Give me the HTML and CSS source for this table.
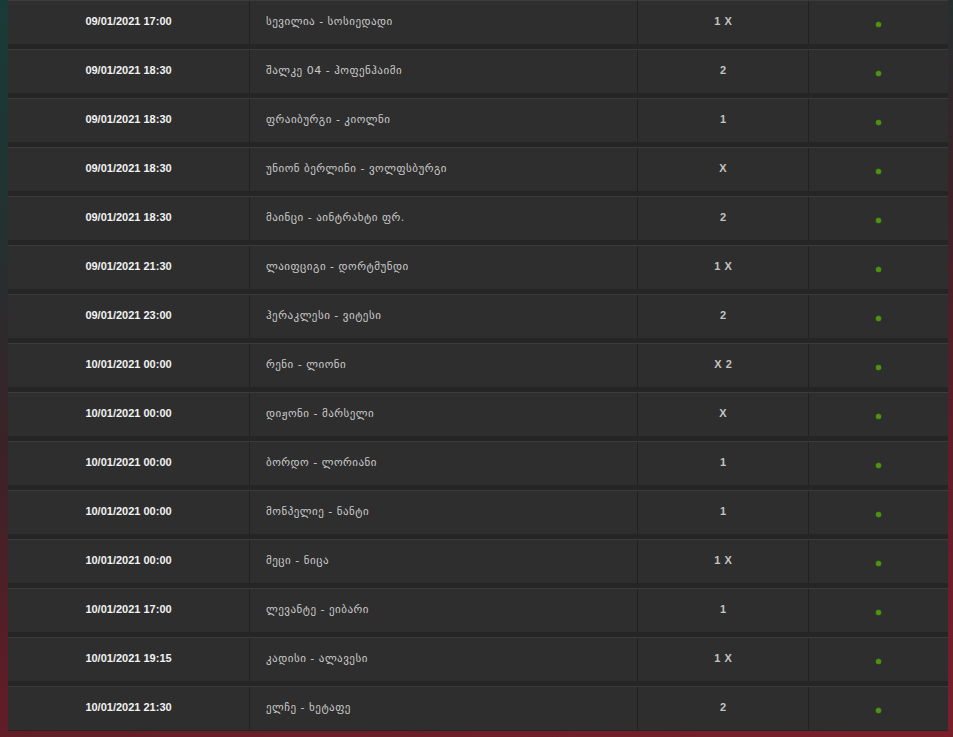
FILE: index.html
```html
<!DOCTYPE html>
<html lang="ka">
<head>
<meta charset="utf-8">
<title>პროგნოზები</title>
<link rel="stylesheet" href="styles.css">
</head>
<body>
<div class="table">
  <div class="row"><div class="c date">09/01/2021 17:00</div><div class="c teams">სევილია - სოსიედადი</div><div class="c res">1 X</div><div class="c st"><span class="dot"></span></div></div>
  <div class="row"><div class="c date">09/01/2021 18:30</div><div class="c teams">შალკე 04 - ჰოფენჰაიმი</div><div class="c res">2</div><div class="c st"><span class="dot"></span></div></div>
  <div class="row"><div class="c date">09/01/2021 18:30</div><div class="c teams">ფრაიბურგი - კიოლნი</div><div class="c res">1</div><div class="c st"><span class="dot"></span></div></div>
  <div class="row"><div class="c date">09/01/2021 18:30</div><div class="c teams">უნიონ ბერლინი - ვოლფსბურგი</div><div class="c res">X</div><div class="c st"><span class="dot"></span></div></div>
  <div class="row"><div class="c date">09/01/2021 18:30</div><div class="c teams">მაინცი - აინტრახტი ფრ.</div><div class="c res">2</div><div class="c st"><span class="dot"></span></div></div>
  <div class="row"><div class="c date">09/01/2021 21:30</div><div class="c teams">ლაიფციგი - დორტმუნდი</div><div class="c res">1 X</div><div class="c st"><span class="dot"></span></div></div>
  <div class="row"><div class="c date">09/01/2021 23:00</div><div class="c teams">ჰერაკლესი - ვიტესი</div><div class="c res">2</div><div class="c st"><span class="dot"></span></div></div>
  <div class="row"><div class="c date">10/01/2021 00:00</div><div class="c teams">რენი - ლიონი</div><div class="c res">X 2</div><div class="c st"><span class="dot"></span></div></div>
  <div class="row"><div class="c date">10/01/2021 00:00</div><div class="c teams">დიჟონი - მარსელი</div><div class="c res">X</div><div class="c st"><span class="dot"></span></div></div>
  <div class="row"><div class="c date">10/01/2021 00:00</div><div class="c teams">ბორდო - ლორიანი</div><div class="c res">1</div><div class="c st"><span class="dot"></span></div></div>
  <div class="row"><div class="c date">10/01/2021 00:00</div><div class="c teams">მონპელიე - ნანტი</div><div class="c res">1</div><div class="c st"><span class="dot"></span></div></div>
  <div class="row"><div class="c date">10/01/2021 00:00</div><div class="c teams">მეცი - ნიცა</div><div class="c res">1 X</div><div class="c st"><span class="dot"></span></div></div>
  <div class="row"><div class="c date">10/01/2021 17:00</div><div class="c teams">ლევანტე - ეიბარი</div><div class="c res">1</div><div class="c st"><span class="dot"></span></div></div>
  <div class="row"><div class="c date">10/01/2021 19:15</div><div class="c teams">კადისი - ალავესი</div><div class="c res">1 X</div><div class="c st"><span class="dot"></span></div></div>
  <div class="row"><div class="c date">10/01/2021 21:30</div><div class="c teams">ელჩე - ხეტაფე</div><div class="c res">2</div><div class="c st"><span class="dot"></span></div></div>
</div>
</body>
</html>
```
FILE: styles.css
```css
html, body {
  margin: 0;
  padding: 0;
  height: 100%;
}
body {
  background: linear-gradient(165deg, #193b37 0%, #1f3432 18%, #3a2228 45%, #5e1d27 70%, #7a1f2a 100%);
  font-family: "Liberation Sans", "DejaVu Sans", sans-serif;
  overflow: hidden;
}
.table {
  width: 940px;
  margin-left: 8px;
  background: #252525;
  display: flex;
  flex-direction: column;
  gap: 5px;
  padding-bottom: 1px;
}
.row {
  display: grid;
  grid-template-columns: 242px 388px 171px 139px;
  height: 44px;
  background: #2e2e2e;
  border-top: 1px solid #3b3b3b;
  box-sizing: border-box;
}
.c {
  display: flex;
  align-items: center;
  border-right: 1px solid #212121;
  font-size: 11px;
  line-height: 1;
  padding-bottom: 2px;
}
.c:last-child {
  border-right: none;
}
.date {
  justify-content: center;
  font-weight: bold;
  color: #f2f2f2;
}
.teams {
  padding-left: 16px;
  color: #cccccc;
  font-family: "DejaVu Sans", sans-serif;
  font-size: 11px;
  letter-spacing: 0.5px;
}
.res {
  justify-content: center;
  font-weight: bold;
  color: #c4c4c4;
  word-spacing: 1px;
}
.st {
  justify-content: center;
  padding-top: 3px;
  padding-bottom: 0;
}
.dot {
  width: 5px;
  height: 5px;
  border-radius: 50%;
  background: #4f9314;
  box-shadow: 0 0 0 0.5px #3a6a10;
}
```
